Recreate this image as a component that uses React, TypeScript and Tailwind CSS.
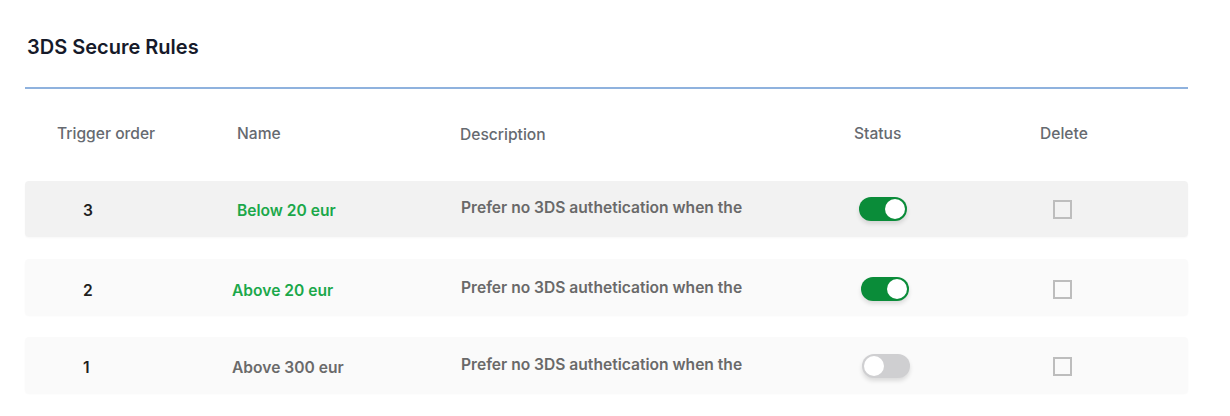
import { useState } from "react";

type Rule = {
  order: number;
  name: string;
  description: string;
  active: boolean;
  highlight: boolean;
};

const initialRules: Rule[] = [
  { order: 3, name: "Below 20 eur", description: "Prefer no 3DS authetication when the", active: true, highlight: true },
  { order: 2, name: "Above 20 eur", description: "Prefer no 3DS authetication when the", active: true, highlight: false },
  { order: 1, name: "Above 300 eur", description: "Prefer no 3DS authetication when the", active: false, highlight: false },
];

const rowOffset = ["pt-0", "pt-[4px]", "pt-[2px]"];

function Toggle({ on, onChange }: { on: boolean; onChange: () => void }) {
  return (
    <button
      type="button"
      onClick={onChange}
      className={`relative flex h-6 w-12 items-center rounded-full shadow-[0_3px_4px_rgba(0,0,0,0.12)] ${
        on ? "justify-end bg-[#0a8c39]" : "justify-start bg-[#cfcfd1]"
      }`}
    >
      <span className="mx-[2px] h-5 w-5 rounded-full bg-white" />
    </button>
  );
}

export default function App() {
  const [rules, setRules] = useState(initialRules);
  const [checked, setChecked] = useState<Record<number, boolean>>({});

  const toggle = (order: number) =>
    setRules((rs) => rs.map((r) => (r.order === order ? { ...r, active: !r.active } : r)));

  return (
    <div className="min-h-[416px] bg-white px-[25px] pt-[35px] font-['Inter',sans-serif] text-[15.6px]">
      <h2 className="pl-[2px] text-[20px] font-semibold leading-6 text-[#161a2a]">3DS Secure Rules</h2>
      <div className="mt-[28px] h-[2px] w-[1163px] bg-[#8fb2de]" />

      <div className="mt-[22px] grid h-[45px] w-[1163px] grid-cols-[207px_228px_394px_186px_1fr] items-center font-medium text-[#666a70]">
        <span className="pl-[32px]">Trigger order</span>
        <span className="pl-[5px]">Name</span>
        <span className="pt-[2px]">Description</span>
        <span>Status</span>
        <span>Delete</span>
      </div>

      <div className="mt-[25px] flex w-[1163px] flex-col gap-[22px]">
        {rules.map((r, i) => (
          <div
            key={r.order}
            className={`grid h-[56px] grid-cols-[207px_228px_394px_186px_1fr] items-center rounded-[4px] font-semibold shadow-[0_1px_2px_rgba(0,0,0,0.03)] ${rowOffset[i]} ${
              i === 0 ? "bg-[#f2f2f2]" : "bg-[#fafafa]"
            }`}
          >
            <span className="pl-[58px] pt-[3px] text-[#1f1f1f]">{r.order}</span>
            <span
              className={`pt-[3px] ${i === 0 ? "pl-[5px]" : ""} ${
                r.highlight || r.active ? "text-[#1ba84a]" : "text-[#6a6a6a]"
              }`}
            >
              {r.name}
            </span>
            <span className="pb-[2px] pl-[1px] text-[#696969]">{r.description}</span>
            <span className={i === 0 ? "pl-[5px]" : i === 1 ? "pl-[7px]" : "pl-[8px]"}>
              <Toggle on={r.active} onChange={() => toggle(r.order)} />
            </span>
            <span className="flex pl-[13px]">
              <input
                type="checkbox"
                checked={!!checked[r.order]}
                onChange={() => setChecked((c) => ({ ...c, [r.order]: !c[r.order] }))}
                className="block h-[19px] w-[19px] appearance-none border-2 border-[#bdbdbd] bg-transparent checked:bg-[#0a8c39]"
              />
            </span>
          </div>
        ))}
      </div>
    </div>
  );
}
